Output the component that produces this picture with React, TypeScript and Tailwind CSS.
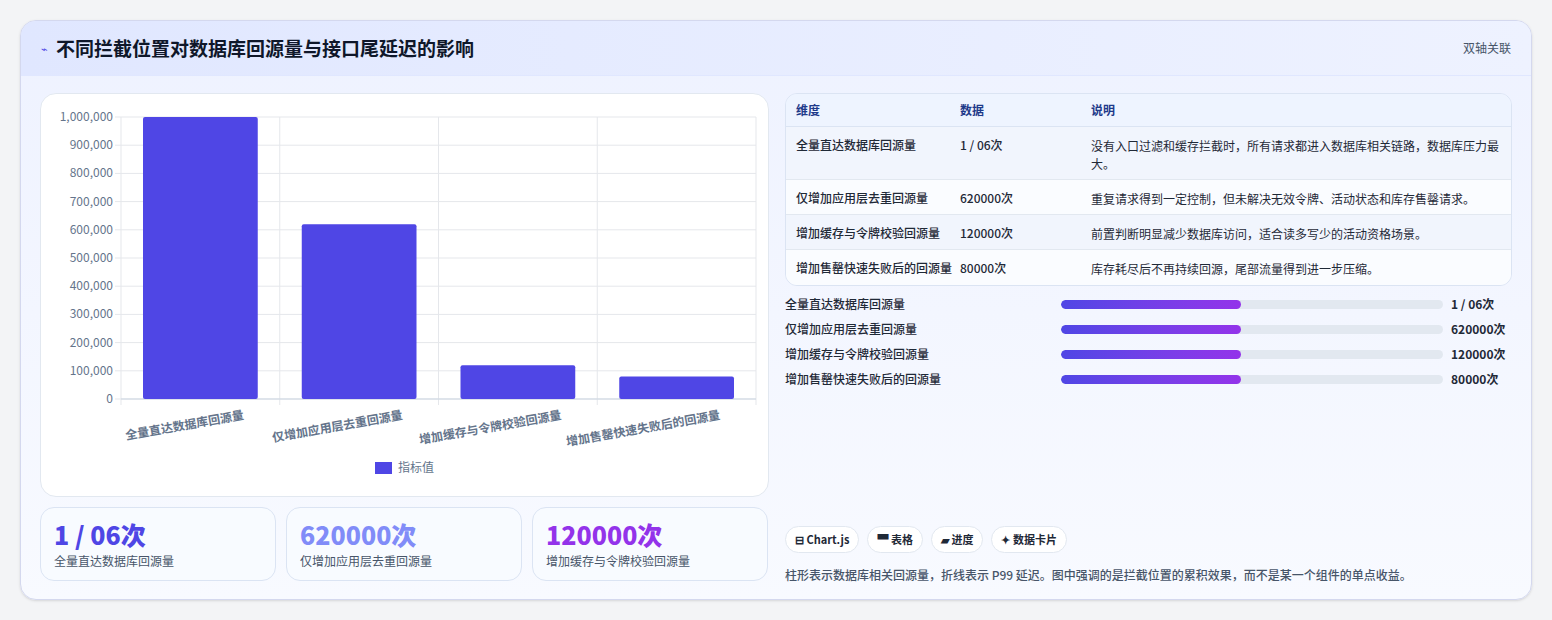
import React from "react";

const F = '"Noto Sans CJK SC", "Noto Sans", sans-serif';

const cats = ["全量直达数据库回源量", "仅增加应用层去重回源量", "增加缓存与令牌校验回源量", "增加售罄快速失败后的回源量"];
const vals = [1000000, 620000, 120000, 80000];
const data = ["1 / 06次", "620000次", "120000次", "80000次"];
const desc = [
  "没有入口过滤和缓存拦截时，所有请求都进入数据库相关链路，数据库压力最大。",
  "重复请求得到一定控制，但未解决无效令牌、活动状态和库存售罄请求。",
  "前置判断明显减少数据库访问，适合读多写少的活动资格场景。",
  "库存耗尽后不再持续回源，尾部流量得到进一步压缩。",
];

function Chart() {
  // svg coords relative to card at (40,93)
  const x0 = 80, x1 = 715, yTop = 23, yBot = 305;
  const step = (yBot - yTop) / 10;
  const cw = (x1 - x0) / 4;
  return (
    <svg width="728" height="403" style={{ fontFamily: F }}>
      {Array.from({ length: 11 }).map((_, i) => {
        const y = yTop + i * step;
        const v = (10 - i) * 100000;
        return (
          <g key={i}>
            <line x1={x0 - 6} x2={x1} y1={y} y2={y} stroke="#e5e7eb" />
            <text x={x0 - 8} y={y + 4} textAnchor="end" fontSize="12" fill="#64748b">
              {v.toLocaleString("en-US")}
            </text>
          </g>
        );
      })}
      {[0, 1, 2, 3, 4].map((i) => (
        <line key={i} x1={x0 + i * cw} x2={x0 + i * cw} y1={yTop} y2={yBot + 6} stroke="#e5e7eb" />
      ))}
      <line x1={x0} x2={x1} y1={yBot} y2={yBot} stroke="#cbd5e1" />
      {vals.map((v, i) => {
        const h = (v / 1000000) * (yBot - yTop);
        return (
          <rect key={i} x={x0 + i * cw + 22} width={cw - 44} y={yBot - h} height={h} rx="2" fill="#4f46e5" />
        );
      })}
      {cats.map((c, i) => (
        <text
          key={i}
          fontSize="12"
          fontWeight="600"
          fill="#64748b"
          textAnchor="end"
          transform={`translate(${x0 + i * cw + cw / 2 + 44},${yBot + 20}) rotate(-10)`}
        >
          {c}
        </text>
      ))}
      <rect x="334" y="368" width="17" height="12" fill="#4f46e5" />
      <text x="357" y="378" fontSize="12" fill="#64748b">指标值</text>
    </svg>
  );
}

export default function App() {
  return (
    <div className="w-[1552px] h-[620px] bg-[#f3f4f6] pt-[20px] pl-[20px]" style={{ fontFamily: F }}>
      <div className="w-[1512px] h-[580px] rounded-[16px] border border-[#d4d8ee] bg-gradient-to-b from-[#eef2ff] to-[#f8faff] overflow-hidden shadow-sm">
        <div className="h-[55px] bg-gradient-to-r from-[#e0e7ff] to-[#eef2ff] flex items-center justify-between px-[20px] border-b border-[#e0e7ff]">
          <div className="flex items-center gap-[8px]">
            <span className="text-[11px] text-[#4f46e5]">⌁</span>
            <span className="text-[19px] font-bold text-[#0f172a]">不同拦截位置对数据库回源量与接口尾延迟的影响</span>
          </div>
          <span className="text-[12px] text-[#475569]">双轴关联</span>
        </div>
        <div className="flex gap-[16px] px-[19px] pt-[17px]">
          <div className="w-[729px] flex flex-col gap-[10px]">
            <div className="h-[404px] bg-white rounded-[16px] border border-[#e2e8f0]">
              <Chart />
            </div>
            <div className="flex gap-[10px]">
              {[0, 1, 2].map((i) => (
                <div key={i} className="w-[236px] h-[74px] rounded-[14px] border border-[#dbe4f3] bg-[#f8fbff] px-[13px] pt-[10px]">
                  <div className={`text-[25px] font-extrabold leading-[32px] ${i === 0 ? "text-[#4f46e5]" : i === 1 ? "text-[#818cf8]" : "text-[#9333ea]"}`}>
                    {data[i]}
                  </div>
                  <div className="text-[12px] text-[#475569] mt-[2px]">{cats[i]}</div>
                </div>
              ))}
            </div>
          </div>
          <div className="w-[729px] flex flex-col">
            <div className="rounded-[12px] border border-[#dbe4f3] overflow-hidden text-[12px]">
              <div className="flex h-[33px] items-center bg-[#eef4ff] text-[#1e3a8a] font-semibold border-b border-[#dbe4f3]">
                <div className="w-[174px] pl-[10px]">维度</div>
                <div className="w-[131px]">数据</div>
                <div className="flex-1">说明</div>
              </div>
              {cats.map((c, i) => (
                <div key={i} className={`flex py-[10px] text-[#1f2937] ${i === 0 ? "h-[53px]" : "h-[35px]"} ${i % 2 === 0 ? "bg-[#f1f5fd]" : "bg-[#fafcff]"} ${i < 3 ? "border-b border-[#e2e8f0]" : ""}`}>
                  <div className="w-[174px] pl-[10px] font-medium leading-[16px]">{c}</div>
                  <div className="w-[131px] font-medium leading-[16px]">{data[i]}</div>
                  <div className="flex-1 pr-[12px] leading-[18px]">{desc[i]}</div>
                </div>
              ))}
            </div>
            <div className="flex flex-col mt-[9px] gap-[7px]">
              {cats.map((c, i) => (
                <div key={i} className="flex items-center h-[18px] text-[12px]">
                  <div className="w-[276px] text-[#1f2937] font-medium">{c}</div>
                  <div className="w-[382px] h-[9px] rounded-full bg-[#e2e8f0] overflow-hidden">
                    <div className="w-[180px] h-full rounded-full bg-gradient-to-r from-[#4f46e5] to-[#9333ea]" />
                  </div>
                  <div className="ml-[8px] font-bold text-[#1f2937]">{data[i]}</div>
                </div>
              ))}
            </div>
            <div className="flex gap-[8px] mt-[138px]">
              {["⊟ Chart.js", "▀ 表格", "▰ 进度", "✦ 数据卡片"].map((t) => (
                <div key={t} className="h-[27px] px-[9px] rounded-full border border-[#e2e8f0] bg-white text-[11px] font-semibold text-[#1f2937] flex items-center">
                  {t}
                </div>
              ))}
            </div>
            <div className="mt-[13px] text-[12px] text-[#475569] font-medium">
              柱形表示数据库相关回源量，折线表示 P99 延迟。图中强调的是拦截位置的累积效果，而不是某一个组件的单点收益。
            </div>
          </div>
        </div>
      </div>
    </div>
  );
}
